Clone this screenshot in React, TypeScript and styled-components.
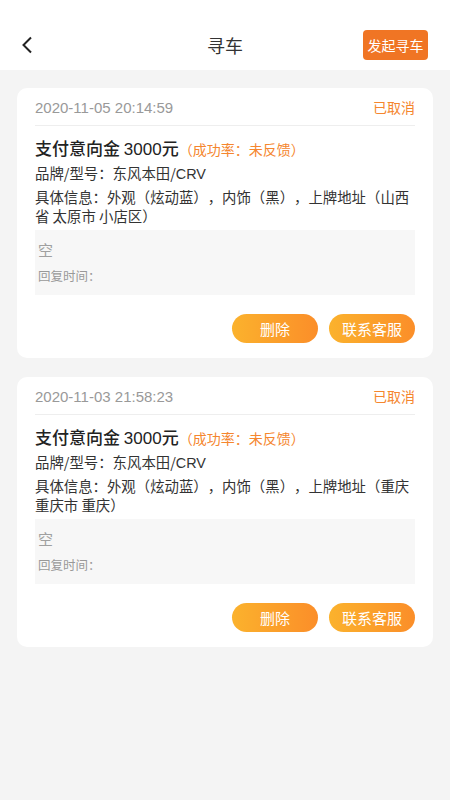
import styled, { createGlobalStyle } from 'styled-components';

const GlobalStyle = createGlobalStyle`
  html, body {
    margin: 0;
    padding: 0;
    background: #f4f4f4;
    font-family: "Noto Sans CJK SC", "Noto Sans", sans-serif;
    text-spacing-trim: space-all;
  }
  * { box-sizing: border-box; }
`;

const Page = styled.div`
  width: 450px;
  min-height: 800px;
  background: #f4f4f4;
`;

const Header = styled.div`
  height: 70px;
  background: #fff;
  display: flex;
  align-items: center;
  justify-content: space-between;
  padding: 20px 22px 0 20px;
  position: relative;
`;

const BackBtn = styled.div`
  width: 40px;
  height: 30px;
  display: flex;
  align-items: center;
`;

const Title = styled.div`
  position: absolute;
  left: 0;
  right: 0;
  top: 20px;
  bottom: 0;
  display: flex;
  align-items: center;
  justify-content: center;
  font-size: 18px;
  color: #333;
  pointer-events: none;
`;

const StartBtn = styled.div`
  width: 65px;
  height: 30px;
  background: #f07524;
  color: #fff;
  border-radius: 4px;
  font-size: 14px;
  display: flex;
  align-items: center;
  justify-content: center;
`;

const List = styled.div`
  display: flex;
  flex-direction: column;
  gap: 19px;
  padding: 18px 17px;
`;

const Card = styled.div`
  background: #fff;
  border-radius: 10px;
  padding: 0 18px 15px;
`;

const TopRow = styled.div`
  height: 38px;
  display: flex;
  align-items: center;
  justify-content: space-between;
  border-bottom: 1px solid #eeeeee;
  padding-top: 1px;
`;

const DateText = styled.span`
  font-family: "Liberation Sans", "Noto Sans CJK SC", sans-serif;
  font-size: 15px;
  color: #999;
`;

const Status = styled.span`
  font-size: 14px;
  color: #f5862e;
`;

const Amount = styled.div`
  margin-top: 11px;
  font-size: 17px;
  line-height: 22px;
  font-weight: 500;
  color: #222;
`;

const AmountNum = styled.span`
  font-family: "Liberation Sans", "Noto Sans CJK SC", sans-serif;
  font-weight: 400;
`;

const Rate = styled.span`
  font-size: 14px;
  font-weight: 400;
  color: #f5862e;
`;

const InfoLine = styled.div<{ $gap?: number }>`
  margin-top: ${(p) => p.$gap ?? 0}px;
  font-size: 14.4px;
  line-height: 19px;
  color: #333;
`;

const Latin = styled.span`
  font-family: "Liberation Sans", "Noto Sans CJK SC", sans-serif;
`;

const ReplyBox = styled.div`
  margin-top: 5px;
  height: 65px;
  background: #f7f7f7;
  padding: 9px 3px 0;
  display: flex;
  flex-direction: column;
`;

const ReplyText = styled.div`
  font-size: 15px;
  line-height: 22px;
  color: #a0a0a0;
`;

const ReplyTime = styled.div`
  margin-top: 6px;
  font-size: 12.5px;
  line-height: 18px;
  color: #999;
`;

const Actions = styled.div`
  margin-top: 19px;
  display: flex;
  justify-content: flex-end;
  gap: 11px;
`;

const ActionBtn = styled.div`
  width: 86px;
  height: 29px;
  border-radius: 15px;
  background: linear-gradient(90deg, #fbb22d, #fb8e29);
  color: #fff;
  font-size: 15px;
  display: flex;
  align-items: center;
  justify-content: center;
`;

type Order = {
  time: string;
  address: string;
};

const orders: Order[] = [
  { time: '2020-11-05 20:14:59', address: '山西省 太原市 小店区' },
  { time: '2020-11-03 21:58:23', address: '重庆 重庆市 重庆' },
];

const OrderCard = ({ order }: { order: Order }) => (
  <Card>
    <TopRow>
      <DateText>{order.time}</DateText>
      <Status>已取消</Status>
    </TopRow>
    <Amount>
      支付意向金 <AmountNum>3000</AmountNum>元<Rate>（成功率：未反馈）</Rate>
    </Amount>
    <InfoLine $gap={2}>
      品牌/型号：东风本田/<Latin>CRV</Latin>
    </InfoLine>
    <InfoLine $gap={3}>
      具体信息：外观（炫动蓝），内饰（黑），上牌地址（{order.address}）
    </InfoLine>
    <ReplyBox>
      <ReplyText>空</ReplyText>
      <ReplyTime>回复时间：</ReplyTime>
    </ReplyBox>
    <Actions>
      <ActionBtn>删除</ActionBtn>
      <ActionBtn>联系客服</ActionBtn>
    </Actions>
  </Card>
);

export default function App() {
  return (
    <>
      <GlobalStyle />
      <Page>
        <Header>
          <BackBtn>
            <svg width="14" height="18" viewBox="0 0 14 18">
              <path d="M11 1.5 L3.5 9 L11 16.5" fill="none" stroke="#222" strokeWidth="2" />
            </svg>
          </BackBtn>
          <Title>寻车</Title>
          <StartBtn>发起寻车</StartBtn>
        </Header>
        <List>
          {orders.map((o) => (
            <OrderCard key={o.time} order={o} />
          ))}
        </List>
      </Page>
    </>
  );
}
